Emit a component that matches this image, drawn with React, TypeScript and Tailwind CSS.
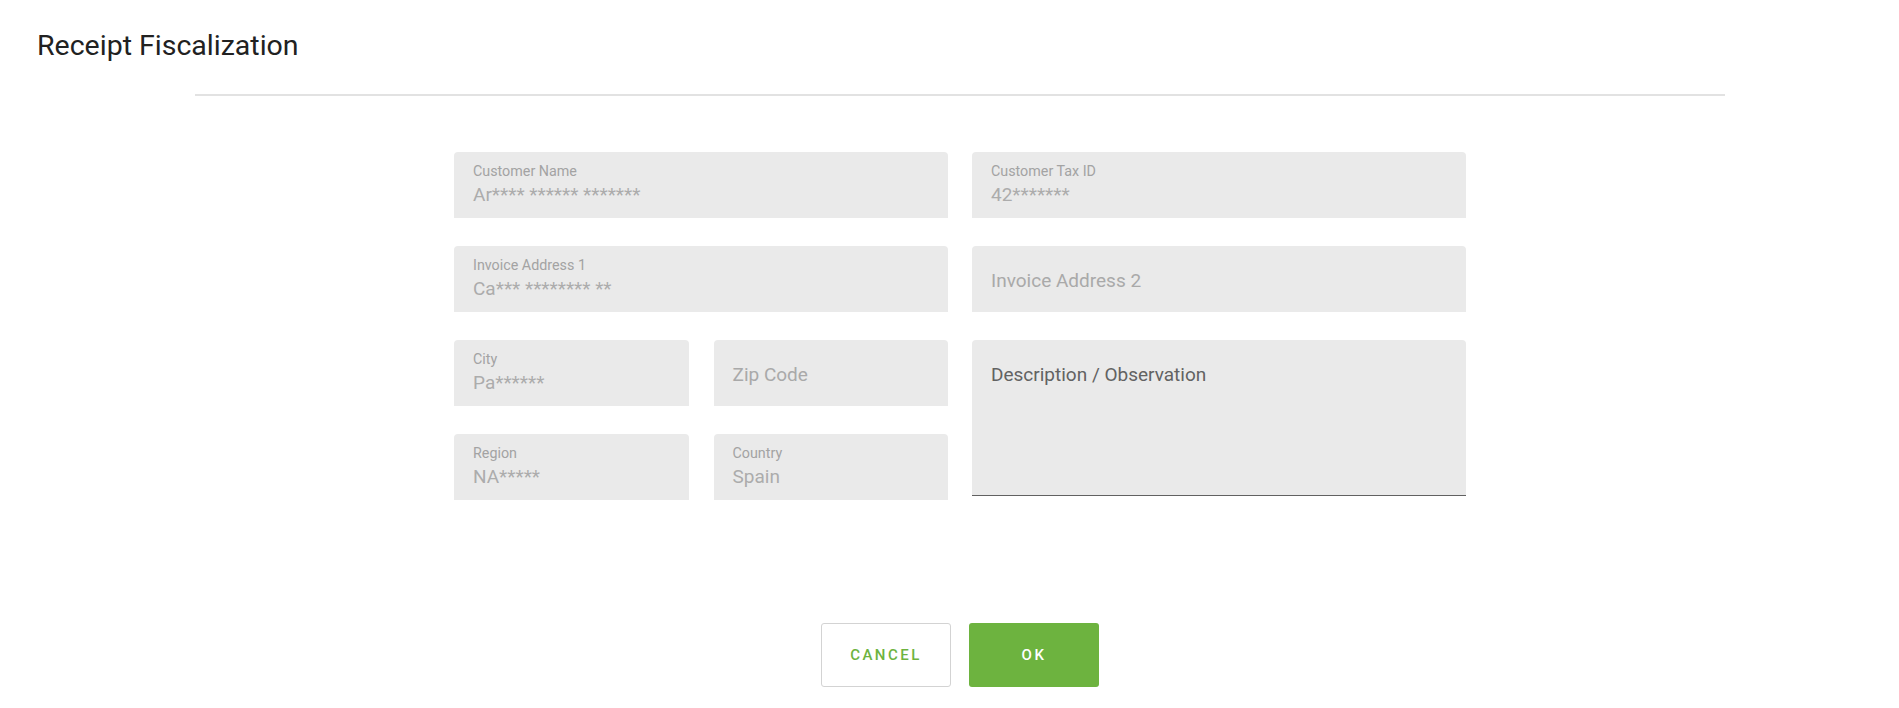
import React from "react";

interface FieldProps {
  label?: string;
  value?: string;
  placeholder?: string;
  className?: string;
}

function Field({ label, value, placeholder, className = "" }: FieldProps) {
  if (placeholder) {
    return (
      <div
        className={`h-[66px] rounded-t-[4px] bg-[#eaeaea] px-[19px] pt-[4px] flex items-center ${className}`}
      >
        <span className="text-[19px] leading-[22px] text-[#a9a9a9]">{placeholder}</span>
      </div>
    );
  }

  return (
    <div className={`h-[66px] rounded-t-[4px] bg-[#eaeaea] px-[19px] pt-[10px] flex flex-col ${className}`}>
      <span className="text-[14.3px] leading-[18px] text-[#a3a3a3]">{label}</span>
      <span className="mt-[4px] text-[19px] leading-[22px] text-[#acacac]">{value}</span>
    </div>
  );
}

export default function App() {
  return (
    <div className="h-[708px] w-full bg-white font-['Roboto','Liberation_Sans',sans-serif]">
      <div className="pl-[37px] pt-[29px] h-[94px]">
        <h1 className="text-[28.5px] leading-[34px] text-[#212121]">Receipt Fiscalization</h1>
      </div>
      <div className="ml-[195px] w-[1530px] h-[2px] bg-[#e2e2e2]" />

      <div className="ml-[454px] mt-[56px] w-[1012px] grid grid-cols-2 gap-x-[24px]">
        <div className="flex flex-col gap-y-[28px]">
          <Field label="Customer Name" value="Ar**** ****** *******" />
          <Field label="Invoice Address 1" value="Ca*** ******** **" />
          <div className="grid grid-cols-2 gap-x-[25px] gap-y-[28px]">
            <Field label="City" value="Pa******" />
            <Field placeholder="Zip Code" />
            <Field label="Region" value="NA*****" />
            <Field label="Country" value="Spain" />
          </div>
        </div>
        <div className="flex flex-col gap-y-[28px]">
          <Field label="Customer Tax ID" value="42*******" />
          <Field placeholder="Invoice Address 2" />
          <div className="h-[156px] rounded-t-[4px] bg-[#eaeaea] border-b-[1.5px] border-[#616161] px-[19px] pt-[24px]">
            <span className="text-[19px] leading-[20px] text-[#626262]">Description / Observation</span>
          </div>
        </div>
      </div>

      <div className="mt-[123px] flex justify-center gap-[18px] pl-[21px]">
        <button className="h-[64px] w-[130px] rounded-[3px] border border-[#d3d3d3] bg-white text-[15px] font-medium tracking-[2.5px] text-[#6db33f]">
          CANCEL
        </button>
        <button className="h-[64px] w-[130px] rounded-[3px] bg-[#6db33f] text-[15px] font-medium tracking-[2.5px] text-white">
          OK
        </button>
      </div>
    </div>
  );
}
